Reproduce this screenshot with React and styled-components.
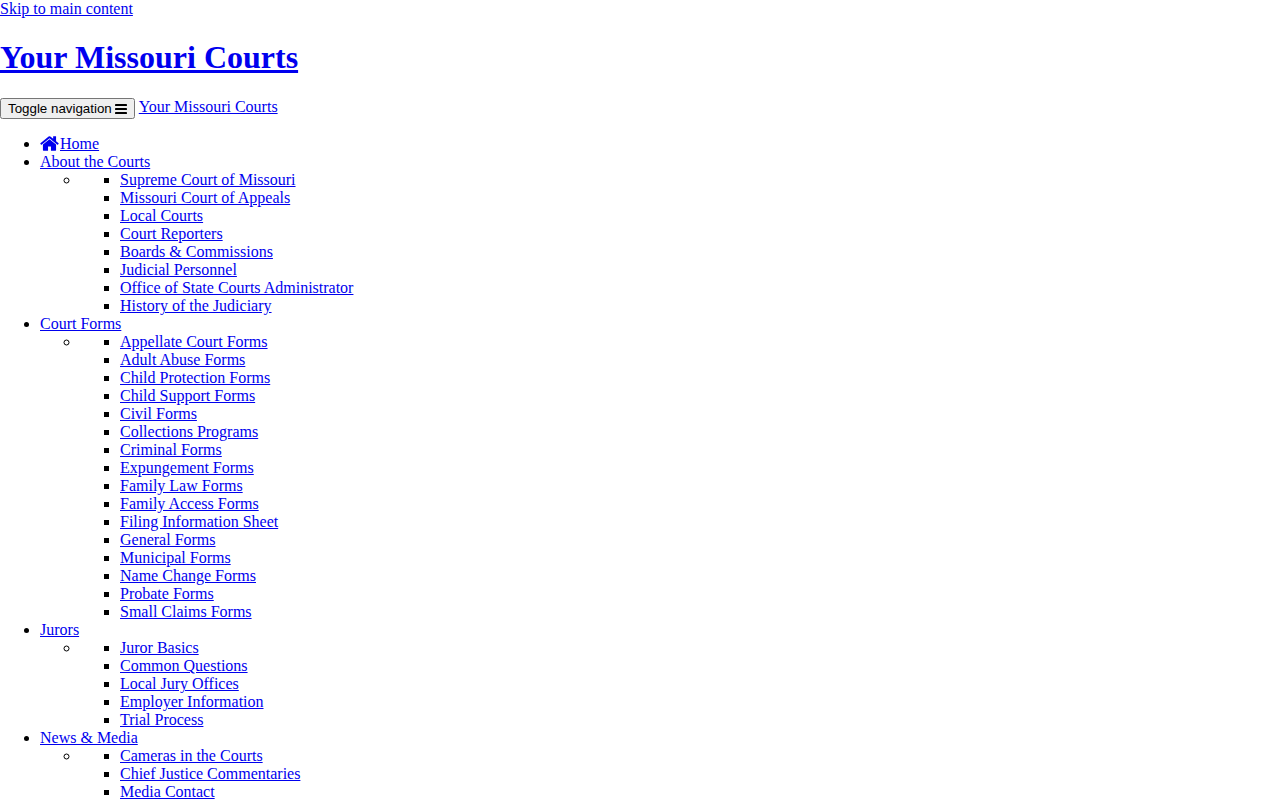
import React from 'react';
import styled, { createGlobalStyle } from 'styled-components';

const GlobalStyle = createGlobalStyle`
  body {
    margin: 0;
    background: #fff;
    color: #000;
    font-family: "Liberation Serif", "Times New Roman", serif;
    font-size: 16px;
    line-height: 18px;
  }
`;

const Link = styled.a`
  color: #0000ee;
  text-decoration: underline;
`;

const SiteTitle = styled.h1`
  margin: 21px 0 22px;
  font-size: 32px;
  line-height: 37px;
  font-weight: bold;
`;

const NavHeader = styled.div`
  display: flex;
  align-items: flex-start;
  gap: 4px;
`;

const ToggleButton = styled.button`
  display: flex;
  align-items: center;
  gap: 3px;
  padding: 1px 6px;
  line-height: 15px;
  color: #000;
`;

const Menu = styled.ul`
  margin: 16px 0;
  padding-left: 40px;
  list-style-type: disc;
`;

const Group = styled.ul`
  margin: 0;
  padding-left: 40px;
  list-style-type: circle;
`;

const SubMenu = styled.ul`
  margin: 0;
  padding-left: 40px;
  list-style-type: square;
`;

const HomeGlyph = styled.svg`
  width: 19px;
  height: 15px;
  margin-right: 1px;
  vertical-align: -2px;
  fill: currentColor;
`;

const BarsGlyph = styled.svg`
  width: 12px;
  height: 10px;
  fill: currentColor;
`;

function HomeIcon() {
  return (
    <HomeGlyph viewBox="64 253 1664 1283" aria-hidden="true">
      <path d="M1472 992v480q0 26-19 45t-45 19h-384v-384h-256v384h-384q-26 0-45-19t-19-45v-480q0-1 .5-3t.5-3l575-474 575 474q1 2 1 6zm223-69l-62 74q-8 9-21 11h-3q-13 0-21-7l-692-577-692 577q-12 8-24 7-13-2-21-11l-62-74q-8-10-7-23.5t11-21.5l719-599q32-26 76-26t76 26l244 204v-195q0-14 9-23t23-9h192q14 0 23 9t9 23v408l219 182q10 8 11 21.5t-7 23.5z" />
    </HomeGlyph>
  );
}

function BarsIcon() {
  return (
    <BarsGlyph viewBox="0 0 12 10" aria-hidden="true">
      <rect width="12" height="2" rx=".4" />
      <rect y="4" width="12" height="2" rx=".4" />
      <rect y="8" width="12" height="2" rx=".4" />
    </BarsGlyph>
  );
}

const sections = [
  {
    title: 'About the Courts',
    items: [
      'Supreme Court of Missouri',
      'Missouri Court of Appeals',
      'Local Courts',
      'Court Reporters',
      'Boards & Commissions',
      'Judicial Personnel',
      'Office of State Courts Administrator',
      'History of the Judiciary',
    ],
  },
  {
    title: 'Court Forms',
    items: [
      'Appellate Court Forms',
      'Adult Abuse Forms',
      'Child Protection Forms',
      'Child Support Forms',
      'Civil Forms',
      'Collections Programs',
      'Criminal Forms',
      'Expungement Forms',
      'Family Law Forms',
      'Family Access Forms',
      'Filing Information Sheet',
      'General Forms',
      'Municipal Forms',
      'Name Change Forms',
      'Probate Forms',
      'Small Claims Forms',
    ],
  },
  {
    title: 'Jurors',
    items: [
      'Juror Basics',
      'Common Questions',
      'Local Jury Offices',
      'Employer Information',
      'Trial Process',
    ],
  },
  {
    title: 'News & Media',
    items: ['Cameras in the Courts', 'Chief Justice Commentaries', 'Media Contact'],
  },
];

export default function App() {
  return (
    <>
      <GlobalStyle />
      <Link href="#main">Skip to main content</Link>
      <header>
        <SiteTitle>
          <Link href="#home">Your Missouri Courts</Link>
        </SiteTitle>
      </header>
      <nav>
        <NavHeader>
          <ToggleButton type="button">
            Toggle navigation <BarsIcon />
          </ToggleButton>
          <Link href="#home">Your Missouri Courts</Link>
        </NavHeader>
        <Menu>
          <li>
            <Link href="#home">
              <HomeIcon />
              Home
            </Link>
          </li>
          {sections.map((section) => (
            <li key={section.title}>
              <Link href="#section">{section.title}</Link>
              <Group>
                <li>
                  <SubMenu>
                    {section.items.map((item) => (
                      <li key={item}>
                        <Link href="#page">{item}</Link>
                      </li>
                    ))}
                  </SubMenu>
                </li>
              </Group>
            </li>
          ))}
        </Menu>
      </nav>
    </>
  );
}
